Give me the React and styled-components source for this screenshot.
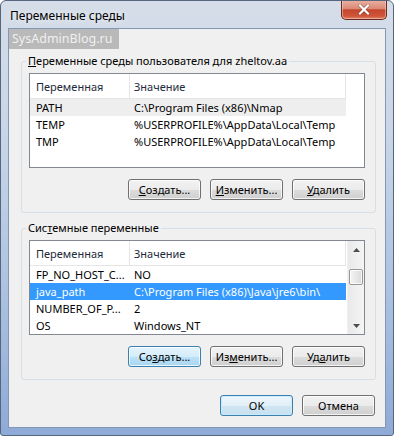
import React from 'react';
import styled, { createGlobalStyle, css } from 'styled-components';

const GlobalStyle = createGlobalStyle`
  html, body {
    margin: 0;
    padding: 0;
    background: #ffffff;
  }
  * {
    box-sizing: border-box;
  }
`;

const font = `'Segoe UI', 'Noto Sans', sans-serif`;

const Window = styled.div`
  width: 394px;
  height: 436px;
  display: flex;
  flex-direction: column;
  padding: 0 7px 7px 7px;
  border: 1px solid #56667f;
  border-radius: 6px 6px 3px 3px;
  background: linear-gradient(180deg, #d5dde8 0%, #c9d6e7 30%, #aec3e1 65%, #8eaad6 100%);
  font-family: ${font};
  font-size: 11px;
  color: #000;
  overflow: hidden;
`;

const TitleBar = styled.div`
  height: 27px;
  display: flex;
  align-items: center;
  justify-content: space-between;
  padding-left: 2px;
`;

const Title = styled.div`
  font-size: 12px;
  color: #000;
  text-shadow: 0 0 6px rgba(255, 255, 255, 0.9);
  margin-top: 1px;
`;

const CloseButton = styled.div`
  align-self: flex-start;
  margin-top: -1px;
  margin-right: -1px;
  width: 46px;
  height: 20px;
  border: 1px solid #6a2a1f;
  border-top: none;
  border-radius: 0 0 5px 5px;
  background: linear-gradient(180deg, #ebb3a4 0%, #db8a76 45%, #c4472d 52%, #cf5538 85%, #e08a6e 100%);
  box-shadow: inset 0 0 0 1px rgba(255, 210, 200, 0.5);
  display: flex;
  align-items: center;
  justify-content: center;
`;

const Client = styled.div`
  flex: 1;
  position: relative;
  display: flex;
  flex-direction: column;
  background: #f0f0f0;
  border: 1px solid #8396b3;
  padding: 0 9px 11px 12px;
`;

const Watermark = styled.div`
  position: absolute;
  top: 0;
  left: 0;
  width: 110px;
  height: 20px;
  background: rgba(140, 140, 140, 0.55);
  color: rgba(255, 255, 255, 0.8);
  font-family: 'Noto Sans', sans-serif;
  font-size: 12.5px;
  line-height: 20px;
  padding-left: 3px;
  white-space: nowrap;
`;

const Group = styled.div`
  position: relative;
  margin-top: ${(p) => p.$top}px;
  border: 1px solid #d5dfe5;
  border-radius: 3px;
  padding: 11px 10px 12px 7px;
  display: flex;
  flex-direction: column;
  gap: 11px;
`;

const Legend = styled.div`
  position: absolute;
  top: -9px;
  left: 4px;
  padding: 0 2px;
  background: #f0f0f0;
  line-height: 16px;
  white-space: nowrap;
`;

const List = styled.div`
  height: 95px;
  border: 1px solid #828790;
  background: #ffffff;
  display: flex;
`;

const Table = styled.div`
  width: 316px;
  display: flex;
  flex-direction: column;
`;

const HeaderRow = styled.div`
  height: 25px;
  display: flex;
  border-bottom: 1px solid #e5e5e5;
  background: #ffffff;
`;

const Row = styled.div`
  height: 17px;
  display: flex;
  ${(p) =>
    p.$state === 'selected' &&
    css`
      background: #3399ff;
      color: #ffffff;
    `}
  ${(p) =>
    p.$state === 'inactive' &&
    css`
      background: #eeeeee;
    `}
`;

const Cell = styled.div`
  width: ${(p) => p.$w}px;
  display: flex;
  align-items: center;
  padding-left: ${(p) => p.$pad}px;
  white-space: nowrap;
  overflow: hidden;
  ${(p) =>
    p.$head &&
    css`
      border-right: 1px solid #e5e5e5;
      color: #1e2a3a;
    `}
`;

const ScrollBar = styled.div`
  width: 17px;
  margin-left: auto;
  display: flex;
  flex-direction: column;
  background: linear-gradient(90deg, #e9e9e9 0%, #f5f5f5 100%);
  border-left: 1px solid #f0f0f0;
`;

const ScrollArrow = styled.div`
  height: 17px;
  display: flex;
  align-items: center;
  justify-content: center;
`;

const ScrollTrack = styled.div`
  flex: 1;
  padding-top: 11px;
`;

const Thumb = styled.div`
  height: 16px;
  margin: 0 1px;
  border: 1px solid #979797;
  border-radius: 2px;
  background: linear-gradient(90deg, #f4f4f4 0%, #e8e8e8 50%, #d9d9d9 100%);
  box-shadow: inset 0 0 0 1px rgba(255, 255, 255, 0.8);
`;

const ButtonRow = styled.div`
  display: flex;
  justify-content: flex-end;
  gap: 9px;
  margin-top: ${(p) => p.$top || 0}px;
  margin-right: ${(p) => p.$right || 0}px;
`;

const Button = styled.div`
  width: 73px;
  height: 21px;
  display: flex;
  align-items: center;
  justify-content: center;
  border: 1px solid #707070;
  border-radius: 3px;
  background: linear-gradient(180deg, #f2f2f2 0%, #ebebeb 50%, #dddddd 50%, #cfcfcf 100%);
  box-shadow: inset 0 0 0 1px rgba(255, 255, 255, 0.75);
  white-space: nowrap;
  ${(p) =>
    p.$variant === 'focus' &&
    css`
      border-color: #3c7fb1;
      background: linear-gradient(180deg, #e5f4fc 0%, #d3ecfa 50%, #bde2f7 50%, #a9d6f1 100%);
    `}
  ${(p) =>
    p.$variant === 'default' &&
    css`
      border-color: #3c7fb1;
      background: linear-gradient(180deg, #eef6fb 0%, #e2eff8 50%, #d2e6f3 50%, #c6dff0 100%);
      box-shadow: inset 0 0 0 1px rgba(200, 235, 255, 0.9);
    `}
`;

const Arrow = ({ down }) => (
  <svg width="7" height="4" viewBox="0 0 7 4">
    <path d={down ? 'M0 0 L7 0 L3.5 4 Z' : 'M0 4 L7 4 L3.5 0 Z'} fill="#4d4d4d" />
  </svg>
);

const CloseIcon = () => (
  <svg width="12" height="11" viewBox="0 0 12 11">
    <path d="M2 1.5 L10 9.5 M10 1.5 L2 9.5" stroke="#5a1f14" strokeWidth="3.4" strokeLinecap="round" opacity="0.5" />
    <path d="M2 1.5 L10 9.5 M10 1.5 L2 9.5" stroke="#ffffff" strokeWidth="2.2" strokeLinecap="square" />
  </svg>
);

const VarList = ({ rows, scroll }) => (
  <List>
    <Table>
      <HeaderRow>
        <Cell $w={100} $pad={6} $head>
          Переменная
        </Cell>
        <Cell $w={216} $pad={4} $head>
          Значение
        </Cell>
      </HeaderRow>
      {rows.map((r) => (
        <Row key={r.name} $state={r.state}>
          <Cell $w={100} $pad={6}>
            {r.name}
          </Cell>
          <Cell $w={216} $pad={4}>
            {r.value}
          </Cell>
        </Row>
      ))}
    </Table>
    {scroll && (
      <ScrollBar>
        <ScrollArrow>
          <Arrow />
        </ScrollArrow>
        <ScrollTrack>
          <Thumb />
        </ScrollTrack>
        <ScrollArrow>
          <Arrow down />
        </ScrollArrow>
      </ScrollBar>
    )}
  </List>
);

const userRows = [
  { name: 'PATH', value: 'C:\\Program Files (x86)\\Nmap', state: 'inactive' },
  { name: 'TEMP', value: '%USERPROFILE%\\AppData\\Local\\Temp' },
  { name: 'TMP', value: '%USERPROFILE%\\AppData\\Local\\Temp' },
];

const systemRows = [
  { name: 'FP_NO_HOST_C...', value: 'NO' },
  { name: 'java_path', value: 'C:\\Program Files (x86)\\Java\\jre6\\bin\\', state: 'selected' },
  { name: 'NUMBER_OF_P...', value: '2' },
  { name: 'OS', value: 'Windows_NT' },
];

const App = () => (
  <React.Fragment>
    <GlobalStyle />
    <Window>
      <TitleBar>
        <Title>Переменные среды</Title>
        <CloseButton>
          <CloseIcon />
        </CloseButton>
      </TitleBar>
      <Client>
        <Watermark>SysAdminBlog.ru</Watermark>

        <Group $top={32}>
          <Legend>
            <u>П</u>еременные среды пользователя для zheltov.aa
          </Legend>
          <VarList rows={userRows} />
          <ButtonRow>
            <Button>
              <span><u>С</u>оздать...</span>
            </Button>
            <Button>
              <span><u>И</u>зменить...</span>
            </Button>
            <Button>
              <span><u>У</u>далить</span>
            </Button>
          </ButtonRow>
        </Group>

        <Group $top={15}>
          <Legend>
            Сис<u>т</u>емные переменные
          </Legend>
          <VarList rows={systemRows} scroll />
          <ButtonRow>
            <Button $variant="focus">
              <span>Со<u>з</u>дать...</span>
            </Button>
            <Button>
              <span>Из<u>м</u>енить...</span>
            </Button>
            <Button>
              <span>Уд<u>а</u>лить</span>
            </Button>
          </ButtonRow>
        </Group>

        <ButtonRow $top={15} $right={1}>
          <Button $variant="default">OK</Button>
          <Button>Отмена</Button>
        </ButtonRow>
      </Client>
    </Window>
  </React.Fragment>
);

export default App;
